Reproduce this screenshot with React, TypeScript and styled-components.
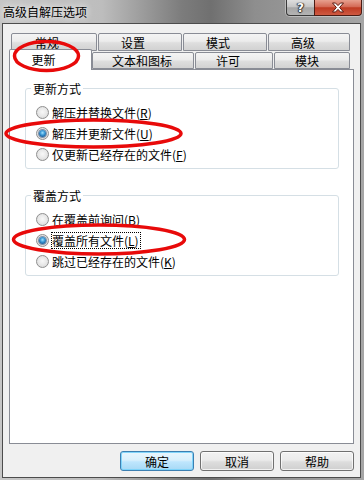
import React from 'react'
import styled, { createGlobalStyle } from 'styled-components'

const GlobalStyle = createGlobalStyle`
  html, body {
    margin: 0;
    padding: 0;
    background: #8a8a8a;
  }
  body {
    font-family: "Noto Sans CJK SC", "Microsoft YaHei", sans-serif;
    font-size: 12px;
    color: #000;
  }
  * {
    box-sizing: border-box;
  }
`

const Frame = styled.div`
  position: relative;
  width: 364px;
  height: 480px;
  display: flex;
  flex-direction: column;
  padding: 0 3px 2px 2px;
  background: linear-gradient(90deg, #c6c6c6 0%, #bdbdbd 28%, #7c7c7c 50%, #707070 58%, #8e8e8e 70%, #a6a6a6 100%);
`

const TitleBar = styled.div`
  height: 23px;
  display: flex;
  justify-content: space-between;
  align-items: flex-start;
  padding-left: 1px;
`

const Title = styled.div`
  padding-top: 4px;
  line-height: 15px;
  font-size: 12px;
  color: #000;
  text-shadow: 0 0 6px rgba(255, 255, 255, 0.9), 0 0 10px rgba(255, 255, 255, 0.6);
`

const CaptionButtons = styled.div`
  display: flex;
  margin-right: -1px;
  box-shadow: 0 0 0 1px rgba(255, 255, 255, 0.35);
  border-radius: 0 0 4px 4px;
`

const HelpButton = styled.div`
  width: 28px;
  height: 16px;
  border: 1px solid #3a3a3a;
  border-top: none;
  border-right: none;
  border-radius: 0 0 0 4px;
  background: linear-gradient(#dedede 0%, #c6c6c6 45%, #a6a6a6 52%, #b4b4b4 100%);
  display: flex;
  align-items: center;
  justify-content: center;
  font-family: "DejaVu Sans", sans-serif;
  font-weight: bold;
  font-size: 12px;
  line-height: 1;
  color: #fff;
  text-shadow: 0 0 1px #222, 1px 0 1px #333, -1px 0 1px #333, 0 1px 1px #333;
`

const CloseButton = styled.div`
  width: 48px;
  height: 16px;
  border: 1px solid #4b1c14;
  border-top: none;
  border-radius: 0 0 4px 0;
  background: linear-gradient(#e7a08f 0%, #d46a56 45%, #bf3a22 52%, #cf5a42 100%);
  display: flex;
  align-items: center;
  justify-content: center;
`

const Client = styled.div`
  flex: 1;
  display: flex;
  flex-direction: column;
  border: 1px solid #4c4c4c;
  background: #f0f0f0;
  padding: 9px 6px 6px 6px;
`

const TabStrip = styled.div`
  display: flex;
  flex-direction: column;
`

const TabRow = styled.div<{ $front?: boolean; $indent: number }>`
  display: flex;
  align-items: flex-start;
  gap: 1px;
  height: 18px;
  padding-left: ${p => p.$indent}px;
  position: relative;
  z-index: ${p => (p.$front ? 2 : 1)};
`

const Tab = styled.div<{ $width: number; $shift: number; $active?: boolean; $front?: boolean }>`
  width: ${p => p.$width}px;
  height: ${p => (p.$active ? 21 : p.$front ? 17 : 18)}px;
  margin-top: ${p => (p.$active ? -2 : p.$front ? 1 : 0)}px;
  margin-right: ${p => (p.$active ? -1 : 0)}px;
  display: flex;
  align-items: center;
  justify-content: center;
  padding-right: ${p => p.$shift}px;
  padding-bottom: ${p => (p.$active ? 2 : 0)}px;
  border: 1px solid #898c95;
  border-bottom: ${p => (p.$active ? 'none' : '1px solid #898c95')};
  border-radius: 2px 2px 0 0;
  background: ${p =>
    p.$active ? '#ffffff' : 'linear-gradient(#f4f4f4 0%, #ececec 45%, #dedede 55%, #d2d2d2 100%)'};
  font-size: 12px;
  line-height: 15px;
  white-space: nowrap;
`

const Panel = styled.div`
  flex: 1;
  background: #ffffff;
  border: 1px solid #898c95;
  padding: 11px 14px 0 15px;
`

const Group = styled.fieldset`
  margin: 0 0 19px;
  padding: 6px 0 3px 10px;
  border: 1px solid #d5dfe5;
  border-radius: 3px;
  min-width: 0;
`

const Legend = styled.legend`
  padding: 0 2px;
  margin-left: -5px;
  line-height: 15px;
  font-size: 12px;
`

const Option = styled.label`
  display: flex;
  align-items: center;
  gap: 3px;
  height: 21px;
  font-size: 12px;
  line-height: 15px;
  white-space: nowrap;
`

const Radio = styled.span<{ $checked?: boolean }>`
  flex: none;
  width: 13px;
  height: 13px;
  border-radius: 50%;
  border: 1px solid #8f8f8f;
  background: radial-gradient(circle at 50% 45%, #f8f8f8 0%, #e6e6e6 55%, #cfcfcf 100%);
  display: flex;
  align-items: center;
  justify-content: center;

  &::after {
    content: '';
    display: ${p => (p.$checked ? 'block' : 'none')};
    width: 7px;
    height: 7px;
    border-radius: 50%;
    background: radial-gradient(circle at 50% 40%, #9fe0ff 0%, #3c9ad6 40%, #0f4d8a 85%);
    box-shadow: 0 0 0 1px rgba(20, 60, 110, 0.5);
  }
`

const OptionText = styled.span<{ $focused?: boolean }>`
  outline: ${p => (p.$focused ? '1px dotted #000' : 'none')};
  outline-offset: 0;
  padding: 0 1px 0 0;
`

const ButtonBar = styled.div`
  display: flex;
  justify-content: flex-end;
  gap: 6px;
  margin-top: 7px;
`

const Button = styled.button<{ $default?: boolean }>`
  width: 74px;
  height: 20px;
  padding: 0;
  font-family: inherit;
  font-size: 12px;
  line-height: 15px;
  color: #000;
  border-radius: 3px;
  border: 1px solid ${p => (p.$default ? '#3c7fb1' : '#707070')};
  background: ${p =>
    p.$default
      ? 'linear-gradient(#eaf6fd 0%, #d9f0fc 45%, #bee6fd 55%, #a7d9f5 100%)'
      : 'linear-gradient(#f2f2f2 0%, #ebebeb 45%, #dddddd 55%, #cfcfcf 100%)'};
  box-shadow: inset 0 0 0 1px ${p => (p.$default ? 'rgba(120, 210, 250, 0.9)' : 'rgba(255, 255, 255, 0.7)')};
`

const Annotations = styled.svg`
  position: absolute;
  left: 0;
  top: 0;
  z-index: 10;
  pointer-events: none;
`

type TabInfo = { label: string; width: number; shift: number; active?: boolean }

const backTabs: TabInfo[] = [
  { label: '常规', width: 86, shift: 14 },
  { label: '设置', width: 84, shift: 14 },
  { label: '模式', width: 84, shift: 14 },
  { label: '高级', width: 82, shift: 12 },
]

const frontTabs: TabInfo[] = [
  { label: '更新', width: 83, shift: 14, active: true },
  { label: '文本和图标', width: 102, shift: 2 },
  { label: '许可', width: 78, shift: 12 },
  { label: '模块', width: 76, shift: 10 },
]

type OptionInfo = { text: string; key: string; checked?: boolean; focused?: boolean }

const updateOptions: OptionInfo[] = [
  { text: '解压并替换文件', key: 'R' },
  { text: '解压并更新文件', key: 'U', checked: true },
  { text: '仅更新已经存在的文件', key: 'F' },
]

const overwriteOptions: OptionInfo[] = [
  { text: '在覆盖前询问', key: 'B' },
  { text: '覆盖所有文件', key: 'L', checked: true, focused: true },
  { text: '跳过已经存在的文件', key: 'K' },
]

const OptionGroup = ({ title, options }: { title: string; options: OptionInfo[] }) => (
  <Group>
    <Legend>{title}</Legend>
    {options.map(o => (
      <Option key={o.key}>
        <Radio $checked={o.checked} />
        <OptionText $focused={o.focused}>
          {o.text}(<u>{o.key}</u>)
        </OptionText>
      </Option>
    ))}
  </Group>
)

export default function App() {
  return (
    <>
      <GlobalStyle />
      <Frame>
        <TitleBar>
          <Title>高级自解压选项</Title>
          <CaptionButtons>
            <HelpButton>?</HelpButton>
            <CloseButton>
              <svg width="14" height="11" viewBox="0 0 14 11">
                <path
                  d="M1.5 1 L4.5 1 L7 3.6 L9.5 1 L12.5 1 L8.6 5.5 L12.5 10 L9.5 10 L7 7.4 L4.5 10 L1.5 10 L5.4 5.5 Z"
                  fill="#fff"
                  stroke="#5a1a10"
                  strokeWidth="1"
                  strokeLinejoin="round"
                />
              </svg>
            </CloseButton>
          </CaptionButtons>
        </TitleBar>
        <Client>
          <TabStrip>
            <TabRow $indent={2}>
              {backTabs.map(t => (
                <Tab key={t.label} $width={t.width} $shift={t.shift}>
                  {t.label}
                </Tab>
              ))}
            </TabRow>
            <TabRow $front $indent={0}>
              {frontTabs.map(t => (
                <Tab key={t.label} $front $width={t.width} $shift={t.shift} $active={t.active}>
                  {t.label}
                </Tab>
              ))}
            </TabRow>
          </TabStrip>
          <Panel>
            <OptionGroup title="更新方式" options={updateOptions} />
            <OptionGroup title="覆盖方式" options={overwriteOptions} />
          </Panel>
          <ButtonBar>
            <Button $default>确定</Button>
            <Button>取消</Button>
            <Button>帮助</Button>
          </ButtonBar>
        </Client>
        <Annotations width="364" height="480" viewBox="0 0 364 480">
          <g fill="none" stroke="#e80a0a" strokeWidth="3.5">
            <ellipse cx="46.5" cy="56" rx="32" ry="14.5" />
            <ellipse cx="93.5" cy="133.5" rx="87.5" ry="13.5" />
            <ellipse cx="99" cy="239.5" rx="85.5" ry="14.5" />
          </g>
        </Annotations>
      </Frame>
    </>
  )
}
